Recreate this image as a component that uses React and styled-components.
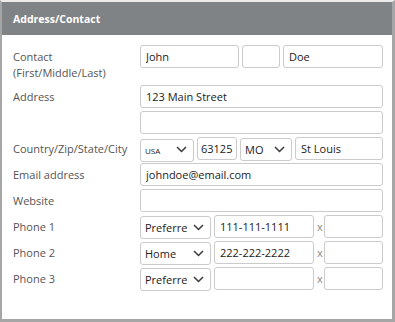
import { Fragment } from "react";
import styled, { createGlobalStyle } from "styled-components";

const GlobalStyle = createGlobalStyle`
  body {
    margin: 0;
    background: #fff;
    font-family: "Open Sans", "Noto Sans", sans-serif;
  }
`;

const Panel = styled.section`
  width: 395px;
  height: 322px;
  box-sizing: border-box;
  border-style: solid;
  border-color: #a6a6a6;
  border-top-color: #ececec;
  border-width: 2px 3px 3px 2px;
  background: #fff;
`;

const Header = styled.h2`
  margin: 0;
  height: 33px;
  display: flex;
  align-items: center;
  padding: 0 11px;
  background: #808386;
  color: #fff;
  font-size: 10.5px;
  font-weight: 700;
`;

const Form = styled.form`
  display: grid;
  grid-template-columns: 127px 243px;
  row-gap: 3px;
  padding: 10px 9px 0 11px;
`;

const Label = styled.label`
  padding: 4px 0 1px;
  font-size: 11px;
  line-height: 16px;
  color: #555;
`;

const Fields = styled.div`
  display: grid;
  grid-template-columns: ${(p) => p.$cols || "1fr"};
  column-gap: 3px;
  align-items: center;
  align-self: start;
`;

const Input = styled.input`
  box-sizing: border-box;
  width: 100%;
  height: 23px;
  margin: 0;
  padding: 0 ${(p) => p.$pad || "5px"};
  border: 1px solid #cbcbcb;
  border-radius: 3px;
  background: #fff;
  font-family: inherit;
  font-size: 11px;
  color: #222;
  outline: none;
`;

const SelectBox = styled.div`
  position: relative;
  height: 23px;
`;

const Select = styled.select`
  box-sizing: border-box;
  width: 100%;
  height: 23px;
  margin: 0;
  padding: 0 ${(p) => p.$padRight || "20px"} 0 4px;
  border: 1px solid #cbcbcb;
  border-radius: 3px;
  background: #fff;
  appearance: none;
  font-family: inherit;
  font-size: ${(p) => (p.$small ? "8px" : "11px")};
  color: #222;
  outline: none;
`;

const Chevron = styled.svg`
  position: absolute;
  right: 7px;
  top: 9px;
  width: 11px;
  height: 7px;
  pointer-events: none;
`;

const Ext = styled.span`
  text-align: center;
  font-size: 11px;
  color: #888;
`;

function Dropdown({ value, options, small, padRight }) {
  return (
    <SelectBox>
      <Select defaultValue={value} $small={small} $padRight={padRight}>
        {options.map((o) => (
          <option key={o}>{o}</option>
        ))}
      </Select>
      <Chevron viewBox="0 0 11 7">
        <polyline
          points="1,1 5.5,5.5 10,1"
          fill="none"
          stroke="#3a3a3a"
          strokeWidth="1.5"
        />
      </Chevron>
    </SelectBox>
  );
}

const PHONE_TYPES = ["Preferred", "Home", "Work", "Mobile"];

const phones = [
  { label: "Phone 1", type: "Preferred", number: "111-111-1111" },
  { label: "Phone 2", type: "Home", number: "222-222-2222" },
  { label: "Phone 3", type: "Preferred", number: "" },
];

export default function App() {
  return (
    <>
      <GlobalStyle />
      <Panel>
        <Header>Address/Contact</Header>
        <Form>
          <Label>
            Contact
            <br />
            (First/Middle/Last)
          </Label>
          <Fields $cols="99px 38px 1fr">
            <Input defaultValue="John" />
            <Input defaultValue="" />
            <Input defaultValue="Doe" />
          </Fields>

          <Label>Address</Label>
          <Fields>
            <Input defaultValue="123 Main Street" />
          </Fields>
          <span />
          <Fields>
            <Input defaultValue="" />
          </Fields>

          <Label>Country/Zip/State/City</Label>
          <Fields $cols="54px 40px 52px 1fr">
            <Dropdown value="USA" options={["USA", "CAN"]} small />
            <Input defaultValue="63125" $pad="3px" />
            <Dropdown value="MO" options={["MO", "IL", "KS"]} />
            <Input defaultValue="St Louis" />
          </Fields>

          <Label>Email address</Label>
          <Fields>
            <Input defaultValue="johndoe@email.com" />
          </Fields>

          <Label>Website</Label>
          <Fields>
            <Input defaultValue="" />
          </Fields>

          {phones.map((p) => (
            <Fragment key={p.label}>
              <Label>{p.label}</Label>
              <Fields $cols="71px 100px 4px 1fr">
                <Dropdown value={p.type} options={PHONE_TYPES} padRight="23px" />
                <Input defaultValue={p.number} />
                <Ext>x</Ext>
                <Input defaultValue="" />
              </Fields>
            </Fragment>
          ))}
        </Form>
      </Panel>
    </>
  );
}
